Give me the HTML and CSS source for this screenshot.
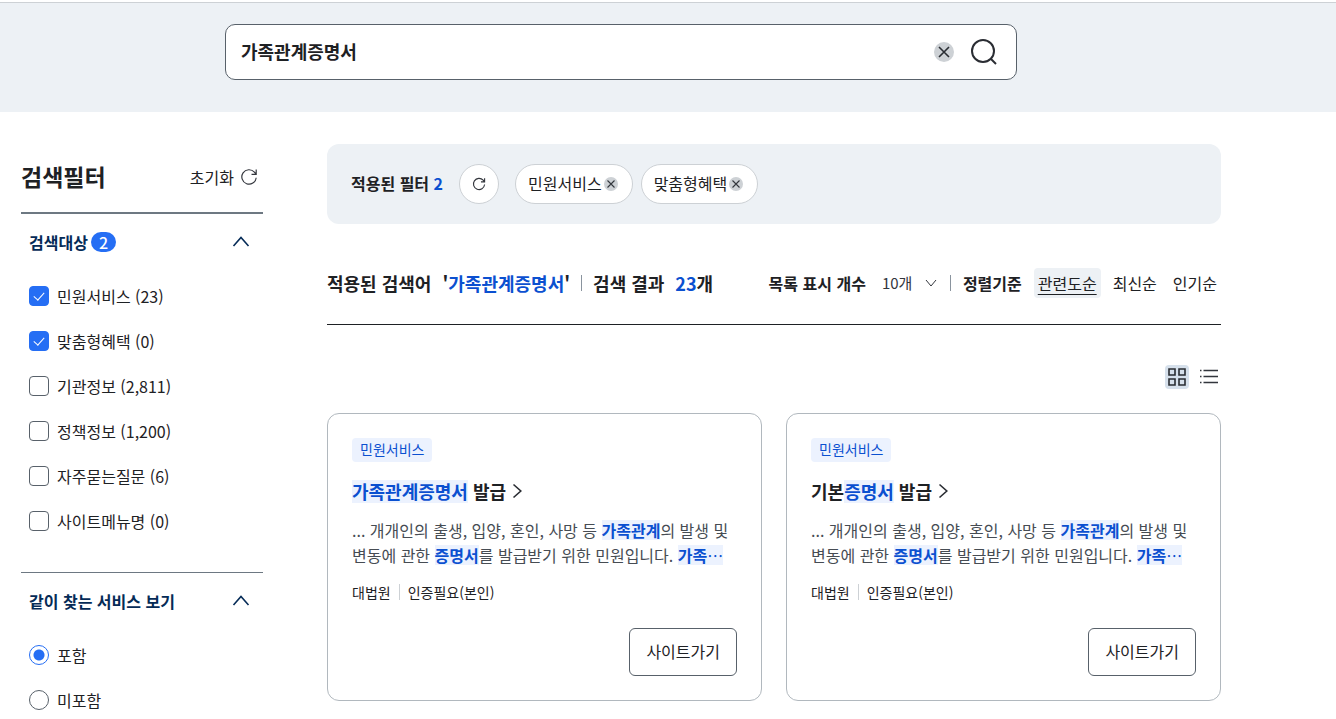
FILE: index.html
```html
<!DOCTYPE html>
<html lang="ko">
<head>
<meta charset="utf-8">
<meta name="viewport" content="width=device-width, initial-scale=1">
<title>가족관계증명서 검색 결과</title>
<link rel="stylesheet" href="styles.css">
</head>
<body>
<svg class="sprite" aria-hidden="true">
  <symbol id="refresh" viewBox="0 0 20 20"><path d="M18 10.800A8 8 0 1 1 16 4.600L17.600 6.500M18 1.800V7H12.800"/></symbol>
  <symbol id="up" viewBox="0 0 20 20"><path d="M2.500 14 10 5.500 17.500 14"/></symbol>
  <symbol id="right" viewBox="0 0 16 16"><path d="M3.500 1.500 10.800 8 3.500 14.500"/></symbol>
  <symbol id="cross" viewBox="0 0 20 20"><circle cx="10" cy="10" r="10" class="disc"/><path d="M5 5 15 15M15 5 5 15"/></symbol>
</svg>

<header class="search-band">
  <form class="search-box" role="search">
    <input class="search-input" type="text" value="가족관계증명서" aria-label="검색어">
    <button class="icon-button" type="reset" aria-label="검색어 지우기"><svg class="icon-20 mid-line"><use href="#cross"/></svg></button>
    <button class="icon-button" type="submit" aria-label="검색"><svg class="icon-28 bold-line" viewBox="0 0 28 28"><circle cx="13" cy="13" r="11"/><path d="M20.500 20.500 26 26"/></svg></button>
  </form>
</header>

<div class="page">
  <aside class="filters">
    <div class="filters-head">
      <h2 class="filters-title">검색필터</h2>
      <button class="reset" type="button">초기화 <svg class="icon-18"><use href="#refresh"/></svg></button>
    </div>
    <section class="filter-group">
      <button class="group-head" type="button" aria-expanded="true"><span class="group-name">검색대상 <span class="badge">2</span></span><svg class="icon-20"><use href="#up"/></svg></button>
      <ul class="options">
        <li><label class="option"><input class="check" type="checkbox" checked>민원서비스 (23)</label></li>
        <li><label class="option"><input class="check" type="checkbox" checked>맞춤형혜택 (0)</label></li>
        <li><label class="option"><input class="check" type="checkbox">기관정보 (2,811)</label></li>
        <li><label class="option"><input class="check" type="checkbox">정책정보 (1,200)</label></li>
        <li><label class="option"><input class="check" type="checkbox">자주묻는질문 (6)</label></li>
        <li><label class="option"><input class="check" type="checkbox">사이트메뉴명 (0)</label></li>
      </ul>
    </section>
    <section class="filter-group">
      <button class="group-head" type="button" aria-expanded="true"><span class="group-name">같이 찾는 서비스 보기</span><svg class="icon-20"><use href="#up"/></svg></button>
      <ul class="options">
        <li><label class="option"><input class="radio" type="radio" name="together" checked>포함</label></li>
        <li><label class="option"><input class="radio" type="radio" name="together">미포함</label></li>
      </ul>
    </section>
  </aside>

  <main class="results">
    <div class="applied">
      <strong class="applied-label">적용된 필터 <span class="accent">2</span></strong>
      <button class="round" type="button" aria-label="필터 초기화"><svg class="icon-14"><use href="#refresh"/></svg></button>
      <div class="chips">
        <button class="chip" type="button">민원서비스<svg class="icon-14"><use href="#cross"/></svg></button>
        <button class="chip" type="button">맞춤형혜택<svg class="icon-14"><use href="#cross"/></svg></button>
      </div>
    </div>

    <div class="summary">
      <h1 class="summary-text">
        <span>적용된 검색어</span>
        <span>'<span class="accent">가족관계증명서</span>'</span>
        <span class="bar"></span>
        <span>검색 결과</span>
        <span><span class="accent">23</span>개</span>
      </h1>
      <div class="tools">
        <label class="tool-label" for="count">목록 표시 개수</label>
        <select class="count" id="count"><option>10개</option><option>20개</option><option>30개</option></select>
        <span class="bar"></span>
        <span class="tool-label">정렬기준</span>
        <div class="sorts">
          <button class="sort sort-on" type="button">관련도순</button>
          <button class="sort" type="button">최신순</button>
          <button class="sort" type="button">인기순</button>
        </div>
      </div>
    </div>

    <div class="views">
      <button class="view view-on" type="button" aria-label="격자로 보기"><svg class="icon-20 mid-line" viewBox="0 0 20 20"><path d="M2 2h6v6H2zM12 2h6v6h-6zM2 12h6v6H2zM12 12h6v6h-6z"/></svg></button>
      <button class="view" type="button" aria-label="목록으로 보기"><svg class="icon-20" viewBox="0 0 20 20"><path d="M4.500 3.500H19M4.500 9.500H19M4.500 15.500H19M1 3.500h1.500M1 9.500h1.500M1 15.500h1.500"/></svg></button>
    </div>

    <div class="cards">
      <article class="card">
        <span class="tag">민원서비스</span>
        <h3 class="card-title"><a href="#"><mark>가족관계증명서</mark> 발급<svg class="icon-16 mid-line"><use href="#right"/></svg></a></h3>
        <p class="desc">... 개개인의 출생, 입양, 혼인, 사망 등 <mark>가족관계</mark>의 발생 및 변동에 관한 <mark>증명서</mark>를 발급받기 위한 민원입니다. <mark>가족<span class="more">⋯</span></mark></p>
        <p class="meta"><span>대법원</span><span class="bar"></span><span>인증필요(본인)</span></p>
        <a class="go" href="#">사이트가기</a>
      </article>
      <article class="card">
        <span class="tag">민원서비스</span>
        <h3 class="card-title"><a href="#">기본<mark>증명서</mark> 발급<svg class="icon-16 mid-line"><use href="#right"/></svg></a></h3>
        <p class="desc">... 개개인의 출생, 입양, 혼인, 사망 등 <mark>가족관계</mark>의 발생 및 변동에 관한 <mark>증명서</mark>를 발급받기 위한 민원입니다. <mark>가족<span class="more">⋯</span></mark></p>
        <p class="meta"><span>대법원</span><span class="bar"></span><span>인증필요(본인)</span></p>
        <a class="go" href="#">사이트가기</a>
      </article>
    </div>
  </main>
</div>
</body>
</html>
```
FILE: styles.css
```css
* { box-sizing: border-box; }
body {
  margin: 0;
  padding-top: 2px;
  background: #fff;
  color: #1e2124;
  font: 16px/24px "Noto Sans CJK KR", sans-serif;
}
h1, h2, h3, p, ul { margin: 0; padding: 0; }
ul { list-style: none; }
a { color: inherit; text-decoration: none; }
button, input, select { font: inherit; color: inherit; }
button { margin: 0; padding: 0; border: 0; background: none; }
svg { flex: none; fill: none; stroke: #33363d; stroke-width: 1.3; }
.sprite { display: none; }
.disc { fill: #cdd1d5; stroke: none; }
.mid-line { stroke: #2a2d33; stroke-width: 1.6; }
.bold-line { stroke: #2a2d33; stroke-width: 2; }
.icon-14 { width: 14px; height: 14px; }
.icon-16 { width: 16px; height: 16px; }
.icon-18 { width: 18px; height: 18px; }
.icon-20 { width: 20px; height: 20px; }
.icon-28 { width: 28px; height: 28px; }
.accent { color: #0b50d0; }
.bar { flex: none; width: 1px; height: 16px; background: #8a949e; }

.search-band {
  padding: 21px 94px 32px 0;
  border-top: 1px solid #cdd1d5;
  background: #edf1f5;
}
.search-box {
  display: flex;
  align-items: center;
  gap: 16px;
  max-width: 792px;
  height: 56px;
  margin: 0 auto;
  padding: 0 18px 0 15px;
  border: 1px solid #58616a;
  border-radius: 10px;
  background: #fff;
}
.search-input {
  flex: 1;
  min-width: 0;
  padding: 0 0 2px;
  border: 0;
  outline: 0;
  background: none;
  font-size: 18px;
  font-weight: 700;
}
.icon-button { display: flex; }

.page {
  display: flex;
  align-items: flex-start;
  gap: 64px;
  max-width: 1221px;
  padding: 32px 0 0 21px;
}
.filters { flex: none; width: 242px; }
.filters-head {
  display: flex;
  align-items: center;
  justify-content: space-between;
  height: 70px;
  padding: 0 5px 2px 0;
  border-bottom: 2px solid #6d7882;
}
.filters-title { padding-bottom: 2px; font-size: 23px; line-height: 32px; }
.reset { display: flex; align-items: center; gap: 6px; }
.filter-group { padding: 0 8px; }
.filter-group + .filter-group { margin-top: 39px; border-top: 1px solid #6d7882; }
.group-head {
  display: flex;
  align-items: center;
  justify-content: space-between;
  width: 100%;
  height: 56px;
  padding-right: 4px;
  color: #052b57;
  font-weight: 700;
}
.group-head svg { stroke: #052b57; stroke-width: 1.6; }
.group-name { display: flex; align-items: center; gap: 3px; }
.badge {
  padding: 0 8px;
  border-radius: 10px;
  background: #256ef4;
  color: #fff;
  font-size: 16px;
  font-weight: 500;
  line-height: 20px;
}
.options { display: grid; gap: 21px; padding-top: 14px; }
.option { display: flex; align-items: center; gap: 8px; }
.check, .radio {
  flex: none;
  appearance: none;
  width: 20px;
  height: 20px;
  margin: 0;
  border: 1px solid #58616a;
  border-radius: 4px;
  background: #fff;
}
.check:checked { display: grid; place-items: center; border-color: #256ef4; background: #256ef4; }
.check:checked::before {
  content: "";
  width: 5px;
  height: 9px;
  margin-bottom: 3px;
  border: solid #fff;
  border-width: 0 1px 1px 0;
  transform: rotate(42deg);
}
.radio { border-radius: 50%; }
.radio:checked {
  border-color: #256ef4;
  background: radial-gradient(circle, #256ef4 5px, #fff 6px);
}

.results { flex: 1; min-width: 0; }
.applied {
  display: flex;
  align-items: center;
  gap: 16px;
  padding: 20px 24px;
  border-radius: 12px;
  background: #edf1f5;
}
.applied-label { padding-bottom: 2px; }
.round, .chip {
  display: flex;
  align-items: center;
  justify-content: center;
  height: 40px;
  border: 1px solid #cdd1d5;
  border-radius: 20px;
  background: #fff;
}
.round { width: 40px; }
.chips { display: flex; gap: 8px; }
.chip { gap: 2px; padding: 0 14px 2px 12px; }
.chip svg { margin-top: 2px; }
.chip svg, .round svg { stroke-width: 1.6; }

.summary {
  display: flex;
  align-items: center;
  justify-content: space-between;
  height: 101px;
  padding-top: 18px;
  border-bottom: 1px solid #1e2124;
}
.summary-text { display: flex; align-items: center; gap: 11px; font-size: 18px; line-height: 28px; }
.tools { display: flex; align-items: center; gap: 12px; }
.tool-label { font-weight: 700; }
.count {
  appearance: none;
  width: 56px;
  margin-left: 4px;
  padding: 0;
  border: 0;
  color: #33363d;
  font-size: 15px;
  background: url("data:image/svg+xml,%3Csvg xmlns='http://www.w3.org/2000/svg' width='14' height='14' fill='none' stroke='%2333363d'%3E%3Cpath d='M2 4l5 6 5-6'/%3E%3C/svg%3E") right center no-repeat;
}
.sorts { display: flex; gap: 8px; }
.sort { height: 30px; padding: 0 4px; border-radius: 4px; }
.sort-on { background: #edf1f5; text-decoration: underline; text-decoration-thickness: 1px; text-underline-offset: 4px; }

.views { display: flex; justify-content: flex-end; gap: 8px; padding: 40px 0 24px; }
.view { display: flex; align-items: center; justify-content: center; width: 24px; height: 24px; border-radius: 4px; }
.view-on { background: #d6e0eb; }

.cards { display: grid; grid-template-columns: repeat(2, minmax(0, 1fr)); gap: 24px; }
.card {
  display: flex;
  flex-direction: column;
  align-items: flex-start;
  padding: 24px;
  border: 1px solid #b1b8be;
  border-radius: 12px;
}
.tag {
  padding: 0 8px 2px;
  border-radius: 4px;
  background: #ecf2fe;
  color: #0b50d0;
  font-size: 14px;
  line-height: 22px;
}
.card-title { margin: 15px 0 13px; font-size: 18px; line-height: 28px; }
.card-title a { display: flex; align-items: center; white-space: pre; }
.card-title svg { margin-left: 4px; }
mark {
  background: linear-gradient(#ecf2fe, #ecf2fe) center / 100% 20px no-repeat;
  color: #0b50d0;
  font-weight: 700;
}
.card-title mark { background-size: 100% 23px; }
.desc { color: #464c53; line-height: 25px; }
.more { font-weight: 400; }
.meta { display: flex; align-items: center; gap: 8px; margin-top: 12px; font-size: 14px; }
.meta .bar { background: #cdd1d5; }
.go {
  align-self: flex-end;
  margin-top: 24px;
  padding: 10px 16px 12px;
  border: 1px solid #58616a;
  border-radius: 6px;
}
```
